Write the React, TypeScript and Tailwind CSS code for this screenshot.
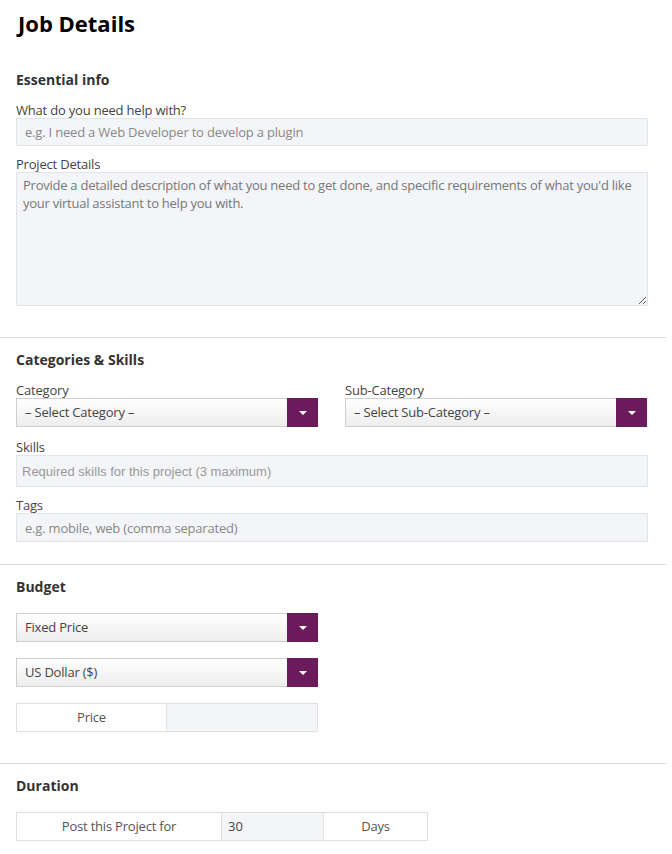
import React from "react";

const font = { fontFamily: '"Open Sans", "Liberation Sans", sans-serif' };

function Label({ children }: { children: React.ReactNode }) {
  return <div className="text-[13px] leading-4 tracking-[-0.2px] text-[#444] h-4">{children}</div>;
}

function Select({ value }: { value: string }) {
  return (
    <div className="flex h-[29px] w-[302px] border border-[#cfcfcf] bg-gradient-to-b from-white to-[#ededed]">
      <div className="flex-1 flex items-center pl-2 text-[13px] tracking-[-0.2px] text-[#444]">{value}</div>
      <div className="w-[31px] -my-px -mr-px bg-[#6b1a5b] flex items-center justify-center">
        <div className="w-0 h-0 border-l-[4px] border-r-[4px] border-t-[4px] border-l-transparent border-r-transparent border-t-white" />
      </div>
    </div>
  );
}

function SectionTitle({ children }: { children: React.ReactNode }) {
  return <h2 className="text-[14px] leading-5 font-bold text-[#333] h-5">{children}</h2>;
}

function Divider() {
  return <div className="h-px w-[666px] bg-[#dcdcdc]" />;
}

export default function App() {
  return (
    <div className="w-[672px] h-[854px] bg-white overflow-hidden" style={font}>
      <h1 className="mt-2 ml-[18px] text-[22px] leading-[30px] font-bold text-black">Job Details</h1>

      {/* Essential info */}
      <section className="px-4 mt-8">
        <SectionTitle>Essential info</SectionTitle>
        <div className="mt-3">
          <Label>What do you need help with?</Label>
          <input
            className="block w-[632px] h-7 px-2 bg-[#f4f5f9] border border-[#e3e4e8] text-[13px] tracking-[-0.2px] text-[#555] placeholder:text-[#888] outline-none"
            placeholder="e.g. I need a Web Developer to develop a plugin"
          />
        </div>
        <div className="mt-[10px]">
          <Label>Project Details</Label>
          <textarea
            className="block w-[632px] h-[134px] px-[6px] py-[3px] bg-[#f4f5f9] border border-[#e3e4e8] text-[13px] leading-[18px] tracking-[-0.25px] text-[#555] placeholder:text-[#777] outline-none"
            placeholder="Provide a detailed description of what you need to get done, and specific requirements of what you'd like your virtual assistant to help you with."
          />
        </div>
      </section>

      <div className="mt-[31px]">
        <Divider />
      </div>

      {/* Categories & Skills */}
      <section className="px-4 mt-3">
        <SectionTitle>Categories &amp; Skills</SectionTitle>
        <div className="mt-3 flex gap-[27px]">
          <div>
            <Label>Category</Label>
            <Select value="– Select Category –" />
          </div>
          <div>
            <Label>Sub-Category</Label>
            <Select value="– Select Sub-Category –" />
          </div>
        </div>
        <div className="mt-3">
          <Label>Skills</Label>
          <input
            className="block w-[632px] h-8 px-[5px] bg-[#f4f5f9] border border-[#e3e4e8] text-[13px] text-[#555] placeholder:text-[#999] outline-none"
            style={{ fontFamily: '"Liberation Sans", Arial, sans-serif' }}
            placeholder="Required skills for this project (3 maximum)"
          />
        </div>
        <div className="mt-[10px]">
          <Label>Tags</Label>
          <input
            className="block w-[632px] h-[29px] px-2 bg-[#f4f5f9] border border-[#e3e4e8] text-[13px] tracking-[-0.2px] text-[#555] placeholder:text-[#888] outline-none"
            placeholder="e.g. mobile, web (comma separated)"
          />
        </div>
      </section>

      <div className="mt-[22px]">
        <Divider />
      </div>

      {/* Budget */}
      <section className="px-4 mt-3">
        <SectionTitle>Budget</SectionTitle>
        <div className="mt-4 flex flex-col gap-4">
          <Select value="Fixed Price" />
          <Select value="US Dollar ($)" />
          <div className="flex h-[29px] w-[302px] border border-[#e0e0e0]">
            <div className="w-[150px] flex items-center justify-center text-[13px] tracking-[-0.2px] text-[#555] bg-white border-r border-[#e0e0e0]">
              Price
            </div>
            <input className="flex-1 min-w-0 bg-[#f4f5f9] px-2 text-[13px] outline-none" />
          </div>
        </div>
      </section>

      <div className="mt-[31px]">
        <Divider />
      </div>

      {/* Duration */}
      <section className="px-4 mt-3">
        <SectionTitle>Duration</SectionTitle>
        <div className="mt-4 flex h-[29px] w-[412px] border border-[#e0e0e0]">
          <div className="w-[205px] flex items-center justify-center text-[13px] tracking-[-0.2px] text-[#555] bg-white border-r border-[#e0e0e0]">
            Post this Project for
          </div>
          <div className="w-[102px] flex items-center px-[6px] text-[13px] text-[#444] bg-[#f4f5f9] border-r border-[#e0e0e0]">
            30
          </div>
          <div className="flex-1 flex items-center justify-center text-[13px] tracking-[-0.2px] text-[#555] bg-white">Days</div>
        </div>
      </section>
    </div>
  );
}
